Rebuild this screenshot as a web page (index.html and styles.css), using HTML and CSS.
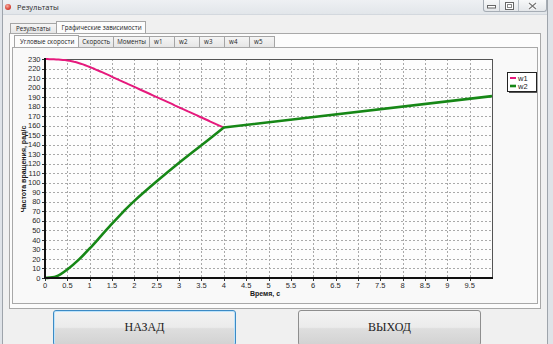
FILE: index.html
```html
<!DOCTYPE html>
<html lang="ru">
<head>
    <meta charset="UTF-8">
    <title>Результаты</title>
    <link rel="stylesheet" href="styles.css">
</head>
<body>
<div class="window">
    <div class="titlebar">
        <span class="app-icon"></span>
        <span class="caption">Результаты</span>
        <div class="caption-buttons">
            <span class="cap-btn cap-min">
                <svg width="9" height="5" viewBox="0 0 9 5"><rect x="0.5" y="1.5" width="8" height="2.5" fill="#fff" stroke="#666"/></svg>
            </span>
            <span class="cap-btn cap-max">
                <svg width="9" height="8" viewBox="0 0 9 8"><rect x="0.5" y="0.5" width="8" height="7" fill="#fff" stroke="#666"/><rect x="2.5" y="2.5" width="4" height="3" fill="none" stroke="#888"/></svg>
            </span>
            <span class="cap-btn cap-close">
                <svg width="9" height="8" viewBox="0 0 9 8"><path d="M1 1 L8 7 M8 1 L1 7" stroke="#fff" stroke-width="3"/><path d="M1 1 L8 7 M8 1 L1 7" stroke="#777" stroke-width="1.2"/></svg>
            </span>
        </div>
    </div>

    <div class="client">
        <div class="tabs tabs-outer">
            <div class="tab">Результаты</div>
            <div class="tab active">Графические зависимости</div>
        </div>

        <div class="panel panel-outer">
            <div class="tabs tabs-inner">
                <div class="tab active">Угловые скорости</div>
                <div class="tab">Скорость</div>
                <div class="tab">Моменты</div>
                <div class="tab tab-w">w1</div>
                <div class="tab tab-w">w2</div>
                <div class="tab tab-w">w3</div>
                <div class="tab tab-w">w4</div>
                <div class="tab tab-w">w5</div>
            </div>

            <div class="panel panel-inner">
                <svg class="chart" id="chart" width="524" height="255" viewBox="0 0 524 255">
                    <rect class="plot-bg" x="32" y="11" width="447" height="219"/>
                    <g id="grid"></g>
                    <rect class="plot-frame" x="32.5" y="11.5" width="447" height="219"/>
                    <g id="ticks"></g>
                    <g id="labels" class="tick-label"></g>
                    <g id="series"></g>
                    <line class="axis" x1="32" y1="10" x2="32" y2="231"/>
                    <line class="axis" x1="31" y1="230" x2="480" y2="230"/>
                    <text class="axis-title" transform="translate(12.5,121) rotate(-90)" text-anchor="middle">Частота вращения, рад/с</text>
                    <text class="axis-title" x="252" y="247.5" text-anchor="middle">Время, с</text>

                    <!-- legend -->
                    <rect class="legend-shadow" x="496" y="26" width="29" height="19"/>
                    <rect class="legend-box" x="494.5" y="24.5" width="29" height="19"/>
                    <line class="w1" x1="497" y1="30" x2="503" y2="30"/>
                    <text class="legend-text" x="505" y="32.5">w1</text>
                    <line class="w2" x1="497" y1="38" x2="503" y2="38"/>
                    <text class="legend-text" x="505" y="40.5">w2</text>
                </svg>
            </div>
        </div>

        <div class="actions">
            <button class="btn btn-focused">НАЗАД</button>
            <button class="btn">ВЫХОД</button>
        </div>
    </div>
</div>

<script>
    // --- chart drawing ---
    const NS = 'http://www.w3.org/2000/svg';
    const X0 = 32, X1 = 479, Y0 = 230, Y1 = 11;
    const sx = t => X0 + t * (X1 - X0) / 10;
    const sy = v => Y0 - v * (Y0 - Y1) / 230;
    const crisp = n => Math.round(n) + 0.5;

    function el(tag, attrs, parent, text) {
        const node = document.createElementNS(NS, tag);
        for (const k in attrs) node.setAttribute(k, attrs[k]);
        if (text !== undefined) node.textContent = text;
        parent.appendChild(node);
        return node;
    }

    const grid = document.getElementById('grid');
    const ticks = document.getElementById('ticks');
    const labels = document.getElementById('labels');
    const series = document.getElementById('series');

    // vertical grid + x labels
    for (let i = 0; i < 20; i++) {
        const t = i / 2;
        const x = crisp(sx(t));
        if (i > 0) el('line', { x1: x, y1: Y1, x2: x, y2: Y0, class: 'grid' }, grid);
        el('line', { x1: x, y1: Y0, x2: x, y2: Y0 + 3, class: 'tick' }, ticks);
        el('text', { x: sx(t), y: 239.5, 'text-anchor': 'middle' }, labels, String(t));
    }

    // horizontal grid + y labels
    for (let v = 0; v <= 230; v += 10) {
        const y = crisp(sy(v));
        if (v > 0 && v < 230) el('line', { x1: X0, y1: y, x2: X1, y2: y, class: 'grid' }, grid);
        el('line', { x1: X0 - 3, y1: y, x2: X0, y2: y, class: 'tick' }, ticks);
        el('text', { x: 27.5, y: sy(v) + 2.6, 'text-anchor': 'end' }, labels, String(v));
    }

    // w1: flat start, then almost linear fall to 158 at t = 4
    function w1(t) {
        const k = 0.18, t0 = 0.63, s = 21.4;
        return 230 - s * k * Math.log(1 + Math.exp((t - t0) / k));
    }
    const p1 = [];
    for (let t = 0; t <= 4.0001; t += 0.05) p1.push(sx(t).toFixed(1) + ',' + sy(w1(t)).toFixed(1));
    el('polyline', { points: p1.join(' '), class: 'w1' }, series);

    const w2 = [[0, 0], [0.25, 1.5], [0.5, 9], [0.75, 19], [1, 31], [1.25, 44], [1.5, 57],
                [1.75, 69.5], [2, 81], [2.5, 101.5], [3, 121], [3.5, 139.5], [4, 158]];
    const pts = w2.map(p => [sx(p[0]), sy(p[1])]);
    let d = 'M' + pts[0][0] + ',' + pts[0][1];
    for (let i = 0; i < pts.length - 1; i++) {
        const a = pts[i - 1] || pts[i], b = pts[i], c = pts[i + 1], e = pts[i + 2] || c;
        const c1 = [b[0] + (c[0] - a[0]) / 6, b[1] + (c[1] - a[1]) / 6];
        const c2 = [c[0] - (e[0] - b[0]) / 6, c[1] - (e[1] - b[1]) / 6];
        d += ' C' + c1.join(',') + ' ' + c2.join(',') + ' ' + c.join(',');
    }
    d += ' L' + sx(10) + ',' + sy(191);
    el('path', { d: d, class: 'w2' }, series);
</script>
</body>
</html>
```

FILE: styles.css
```css
/* --- window --- */
body {
    margin: 0;
    width: 553px;
    height: 344px;
    overflow: hidden;
    background: #dfe3e8;
    font-family: "Open Sans", "Noto Sans", sans-serif;
    color: #1e1e1e;
}

.window {
    margin: 0 5px 0 2px;
    height: 344px;
    border-left: 1px solid #9ea4ab;
    border-right: 1px solid #9ea4ab;
    display: flex;
    flex-direction: column;
    background: #f0f0f0;
}

/* Title bar */
.titlebar {
    height: 15px;
    flex: none;
    display: flex;
    align-items: flex-start;
    background: linear-gradient(#eef0f3, #e2e6ea);
    border-bottom: 1px solid #d3d8de;
    box-sizing: border-box;
}
.app-icon {
    width: 6px;
    height: 6px;
    margin: 4px 0 0 2px;
    border-radius: 50%;
    background: radial-gradient(circle at 40% 35%, #f7b1a4 0%, #dc4a3c 55%, #b32a20 100%);
}
.caption {
    margin: 1px 0 0 6px;
    font-size: 7.5px;
    line-height: 12px;
    color: #2a2a2a;
}
.caption-buttons {
    margin-left: auto;
    display: flex;
    height: 12px;
    border: 1px solid #a6adb5;
    border-top: none;
    border-radius: 0 0 3px 3px;
    background: linear-gradient(#f7f8f9, #e4e7ea);
    box-sizing: border-box;
}
.cap-btn {
    display: flex;
    align-items: center;
    justify-content: center;
}
.cap-min { width: 16px; border-right: 1px solid #b8bec5; align-items: flex-end; padding-bottom: 2px; box-sizing: border-box; }
.cap-max { width: 18px; border-right: 1px solid #b8bec5; }
.cap-close { width: 27px; }

/* Client area */
.client {
    flex: 1;
    padding: 0 6px 0 6px;
    display: flex;
    flex-direction: column;
}

/* Tabs */
.tabs {
    display: flex;
    align-items: flex-end;
    flex: none;
}
.tab {
    box-sizing: border-box;
    padding: 0 3px;
    border: 1px solid #a5a5a5;
    border-bottom: none;
    background: linear-gradient(#f5f5f5, #e6e6e6);
    font-size: 6.2px;
    line-height: 9px;
    color: #222;
    white-space: nowrap;
    margin-right: -1px;
}
.tab.active {
    background: #fcfcfc;
    margin-bottom: -1px;
}

.tabs-outer { height: 18px; padding-left: 1px; }
.tabs-outer .tab { height: 10px; padding: 0 5px; }
.tabs-outer .tab.active { height: 13px; padding: 1px 3px 0 5px; }

.tabs-inner { height: 13px; padding-left: 2px; }
.tabs-inner .tab { height: 11px; }
.tabs-inner .tab.active { height: 13px; padding: 1px 4px 0 5px; }
.tabs-inner .tab-w { width: 26px; padding-left: 4px; }

/* Panels */
.panel {
    border: 1px solid #a8a8a8;
    box-sizing: border-box;
}
.panel-outer {
    height: 276px;
    padding: 0 2px 4px 2px;
    background: #fcfcfc;
    display: flex;
    flex-direction: column;
}
.panel-inner {
    height: 257px;
    background: #f9f9f9;
}
.chart { display: block; }

/* Chart */
.plot-bg { fill: #fdfdfd; }
.plot-frame { fill: none; stroke: #555; stroke-width: 1; }
.grid { stroke: #a9a9a9; stroke-width: 1; stroke-dasharray: 2 2; shape-rendering: crispEdges; }
.tick { stroke: #333; stroke-width: 1; shape-rendering: crispEdges; }
.axis { stroke: #111; stroke-width: 2; }
.tick-label { font-family: "Liberation Sans", Arial, sans-serif; font-size: 7.5px; fill: #2a2a2a; }
.axis-title { font-family: "Liberation Sans", Arial, sans-serif; font-size: 7px; font-weight: bold; fill: #1a1a1a; }
.w1 { fill: none; stroke: #e5197c; stroke-width: 2; stroke-linejoin: round; }
.w2 { fill: none; stroke: #168716; stroke-width: 2.6; stroke-linejoin: round; }
.legend-shadow { fill: #555; }
.legend-box { fill: #fff; stroke: #222; stroke-width: 1; }
.legend-text { font-family: "Liberation Sans", Arial, sans-serif; font-size: 7.5px; fill: #222; }

/* Buttons */
.actions {
    display: flex;
    gap: 62px;
    padding-left: 44px;
    margin-top: 1px;
}
.btn {
    width: 183px;
    height: 36px;
    flex: none;
    border: 1px solid #8e8e8e;
    border-radius: 3px;
    background: linear-gradient(#f3f3f3 0%, #ebebeb 48%, #dedede 52%, #d2d2d2 100%);
    font-family: "Liberation Serif", "Times New Roman", serif;
    font-size: 12px;
    color: #222;
    padding: 0 0 2px 0;
}
.btn-focused {
    border-color: #3c8ac4;
    box-shadow: inset 0 0 0 1px #bde3fb;
}
```
